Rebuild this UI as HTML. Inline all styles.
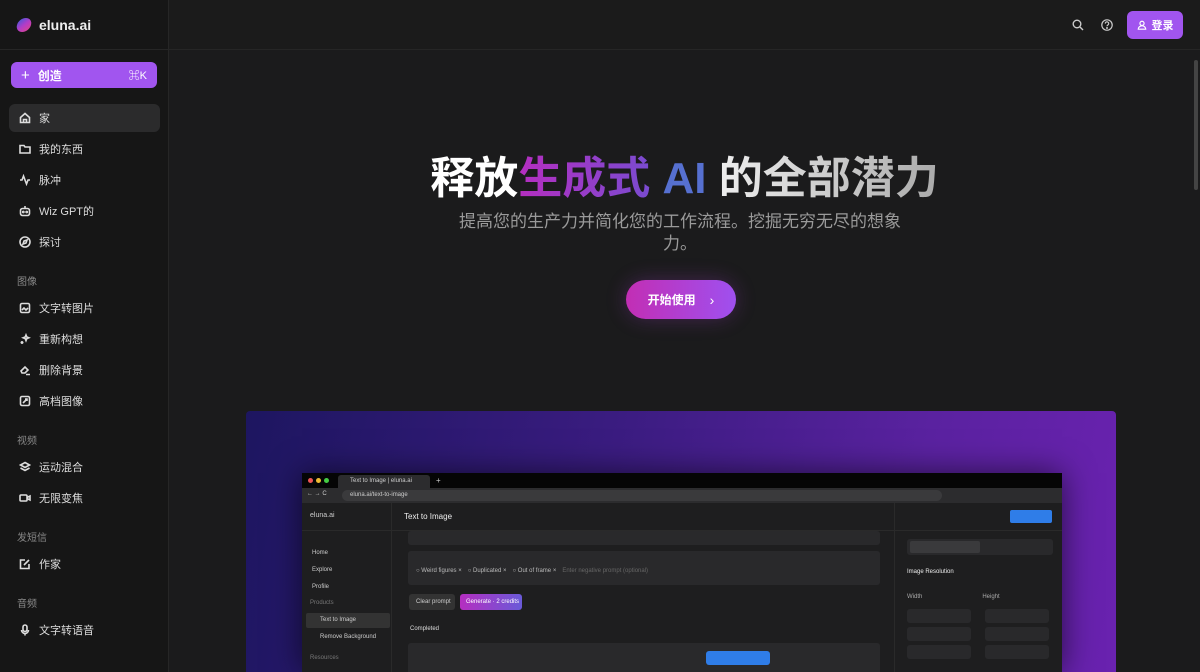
<!DOCTYPE html>
<html><head><meta charset="utf-8"><style>
*{box-sizing:border-box;margin:0;padding:0}
html,body{width:1200px;height:672px;overflow:hidden}
body{background:#1b1b1c;font-family:"Liberation Sans","Noto Sans CJK SC",sans-serif;color:#ddd;position:relative}
.sb{position:absolute;left:0;top:0;width:169px;height:672px;background:#161616;border-right:1px solid #262626}
.logo{height:50px;border-bottom:1px solid #262626;display:flex;align-items:center;padding-left:17px;font-weight:bold;font-size:14px;color:#eee}
.lg{width:14px;height:14px;border-radius:50%;background:linear-gradient(135deg,#3b5bdb,#b23cc8,#e0458a);margin-right:8px;transform:skewX(-15deg)}
.create{position:absolute;left:11px;top:62px;width:146px;height:26px;border-radius:6px;background:#a155ef;color:#fff;font-size:12px;font-weight:bold;display:flex;align-items:center;padding:0 10px}
.create .k{margin-left:auto;font-size:11px;font-weight:normal}
.it{position:absolute;left:9px;width:151px;height:28px;border-radius:6px;display:flex;align-items:center;padding-left:10px;font-size:11px;color:#ddd}
.it svg{width:12px;height:12px;margin-right:8px;stroke:#ddd;fill:none;stroke-width:1.6}
.it.a{background:#2b2b2c}
.sec{position:absolute;left:17px;font-size:10px;color:#888}
.hdr{position:absolute;left:169px;top:0;right:0;height:50px;border-bottom:1px solid #262626;background:#1b1b1b}
.login{position:absolute;right:17px;top:11px;width:56px;height:28px;border-radius:6px;background:#a155ef;color:#fff;font-size:11px;font-weight:bold;display:flex;align-items:center;justify-content:center;gap:5px}
.ic{position:absolute;top:19px;width:12px;height:12px}
.h1{position:absolute;left:169px;right:0;top:142px;text-align:center;font-size:44px;font-weight:bold;letter-spacing:0;color:#fff}
.g1{background:linear-gradient(90deg,#b52ec0,#7a4bd0);-webkit-background-clip:text;color:transparent}
.g2{color:#5670d0}
.g3{background:linear-gradient(90deg,#eee,#aaa);-webkit-background-clip:text;color:transparent}
.sub{position:absolute;left:455px;width:450px;top:211px;text-align:center;font-size:17px;line-height:22px;color:#9a9a9a}
.cta{position:absolute;left:626px;top:280px;width:110px;height:39px;border-radius:20px;background:linear-gradient(90deg,#c22eb4,#9f50ef);color:#fff;font-size:12px;font-weight:bold;display:flex;align-items:center;justify-content:center;gap:14px;box-shadow:0 0 20px rgba(160,60,200,.3)}
.panel{position:absolute;left:246px;top:411px;width:870px;height:270px;border-radius:4px;background:linear-gradient(100deg,#1d1660 0%,#3a1c80 40%,#5a22a0 75%,#6a22b0 100%)}
.br{position:absolute;left:302px;top:473px;width:760px;height:199px;background:#1e1e1f;box-shadow:0 0 30px rgba(0,0,0,.6);font-size:6px;color:#ccc;overflow:hidden}
.tb{height:15px;background:#050505;position:relative}
.ab{height:15px;background:#2c2c2e;position:relative}
.abin{position:absolute;left:40px;right:120px;top:2px;height:11px;background:#3a3a3c;border-radius:6px;padding-left:8px;line-height:11px;font-size:6px}
.app{position:absolute;top:30px;left:0;right:0;bottom:0}
.box{position:absolute;background:#29292b;border-radius:3px}
</style></head><body>
<div class="sb">
<div class="logo"><div class="lg"></div>eluna.ai</div>
<div class="create"><span style="font-size:15px;margin-right:8px;font-weight:normal">+</span>创造<span class="k">⌘K</span></div>
<div class="it a" style="top:104px"><svg viewBox="0 0 12 12"><path d="M1.5 5.5L6 1.5l4.5 4v5h-9z M4.5 10.5V7.5h3v3"/></svg>家</div>
<div class="it" style="top:135px"><svg viewBox="0 0 12 12"><path d="M1 2.5h4l1 1.5h5v6H1z"/></svg>我的东西</div>
<div class="it" style="top:166px"><svg viewBox="0 0 12 12"><path d="M1 6h2l1.5-4 3 8 1.5-4h2"/></svg>脉冲</div>
<div class="it" style="top:197px"><svg viewBox="0 0 12 12"><rect x="1.5" y="3.5" width="9" height="7" rx="2"/><path d="M6 1v2.5"/><circle cx="4.3" cy="7" r=".6"/><circle cx="7.7" cy="7" r=".6"/></svg>Wiz GPT的</div>
<div class="it" style="top:228px"><svg viewBox="0 0 12 12"><circle cx="6" cy="6" r="5"/><path d="M8 4L5 5 4 8l3-1z"/></svg>探讨</div>
<div class="sec" style="top:273px">图像</div>
<div class="it" style="top:294px"><svg viewBox="0 0 12 12"><rect x="1.5" y="1.5" width="9" height="9" rx="1.5"/><path d="M3 8l2-2 2 2 2-2"/></svg>文字转图片</div>
<div class="it" style="top:325px"><svg viewBox="0 0 12 12"><path d="M7 2l.8 2 2 .8-2 .8L7 7.6l-.8-2-2-.8 2-.8zM3 8v3M1.5 9.5h3"/></svg>重新构想</div>
<div class="it" style="top:356px"><svg viewBox="0 0 12 12"><path d="M2 7l4-4 3 3-3 3H3zM7 10.5h4"/></svg>删除背景</div>
<div class="it" style="top:387px"><svg viewBox="0 0 12 12"><rect x="1.5" y="1.5" width="9" height="9" rx="1.5"/><path d="M4 8l4-4M6 4h2v2"/></svg>高档图像</div>
<div class="sec" style="top:432px">视频</div>
<div class="it" style="top:453px"><svg viewBox="0 0 12 12"><path d="M6 1.5L10.5 4 6 6.5 1.5 4zM1.5 7L6 9.5 10.5 7"/></svg>运动混合</div>
<div class="it" style="top:484px"><svg viewBox="0 0 12 12"><rect x="1" y="3" width="7" height="6" rx="1"/><path d="M8 5.5l3-1.5v4L8 6.5"/></svg>无限变焦</div>
<div class="sec" style="top:529px">发短信</div>
<div class="it" style="top:550px"><svg viewBox="0 0 12 12"><path d="M10 6v4.5H1.5V2H6M5 7l5-5"/></svg>作家</div>
<div class="sec" style="top:595px">音频</div>
<div class="it" style="top:616px"><svg viewBox="0 0 12 12"><rect x="4" y="1" width="4" height="6.5" rx="2"/><path d="M2.5 6a3.5 3.5 0 007 0M6 9.5v2"/></svg>文字转语音</div>
</div>
<div class="hdr">
<svg class="ic" style="left:903px" viewBox="0 0 12 12" fill="none" stroke="#ccc" stroke-width="1.4"><circle cx="5" cy="5" r="3.8"/><path d="M8 8l3 3"/></svg>
<svg class="ic" style="left:932px" viewBox="0 0 12 12" fill="none" stroke="#ccc" stroke-width="1.2"><circle cx="6" cy="6" r="5.2"/><path d="M4.3 4.6a1.7 1.7 0 113 1c-.8.5-1.3.8-1.3 1.6"/><circle cx="6" cy="9" r=".4" fill="#ccc"/></svg>
<div class="login"><svg width="10" height="10" viewBox="0 0 12 12" fill="none" stroke="#fff" stroke-width="1.4"><circle cx="6" cy="4" r="2.5"/><path d="M1.5 11a4.5 4 0 019 0z"/></svg>登录</div>
</div>
<div style="position:absolute;right:2px;top:60px;width:4px;height:130px;background:#444;border-radius:2px"></div>
<div class="h1">释放<span class="g1">生成式</span> <span class="g2">AI</span> <span class="g3">的全部潜力</span></div>
<div class="sub">提高您的生产力并简化您的工作流程。挖掘无穷无尽的想象力。</div>
<div class="cta">开始使用<span style="font-weight:normal;font-size:14px">›</span></div>
<div class="panel"></div>
<div class="br">
<div class="tb"><span style="position:absolute;left:6px;top:5px;width:5px;height:5px;border-radius:50%;background:#e55"></span><span style="position:absolute;left:14px;top:5px;width:5px;height:5px;border-radius:50%;background:#eb3"></span><span style="position:absolute;left:22px;top:5px;width:5px;height:5px;border-radius:50%;background:#4c4"></span>
<div style="position:absolute;left:36px;top:2px;width:92px;height:13px;background:#2c2c2e;border-radius:3px 3px 0 0;padding:3px 0 0 12px">Text to Image | eluna.ai</div><span style="position:absolute;left:134px;top:3px;font-size:8px">+</span></div>
<div class="ab"><span style="position:absolute;left:5px;top:3px">← → C</span><div class="abin">eluna.ai/text-to-image</div></div>
<div class="app">
<div style="position:absolute;left:0;top:0;width:90px;bottom:0;border-right:1px solid #2a2a2a">
<div style="padding:9px 8px;font-size:7px;height:28px;border-bottom:1px solid #2a2a2a">eluna.ai</div>
<div style="position:absolute;left:10px;top:42px;line-height:17px">Home<br>Explore<br>Profile</div>
<div style="position:absolute;left:8px;top:97px;color:#777">Products</div>
<div style="position:absolute;left:4px;top:110px;width:84px;height:15px;background:#333;border-radius:2px;padding:4px 0 0 14px">Text to Image</div>
<div style="position:absolute;left:18px;top:131px">Remove Background</div>
<div style="position:absolute;left:8px;top:152px;color:#777">Resources</div>
</div>
<div style="position:absolute;left:90px;right:0;top:0;height:28px;border-bottom:1px solid #2a2a2a"><span style="position:absolute;left:12px;top:9px;font-size:8px;color:#eee">Text to Image</span><span style="position:absolute;right:10px;top:7px;width:42px;height:13px;background:#2f7de8;border-radius:2px"></span></div>
<div class="box" style="left:106px;top:28px;width:472px;height:14px"></div>
<div class="box" style="left:106px;top:48px;width:472px;height:34px"><span style="position:absolute;left:8px;top:14px;color:#bbb">○ Weird figures ×　○ Duplicated ×　○ Out of frame ×　<span style="color:#666">Enter negative prompt (optional)</span></span></div>
<div class="box" style="left:107px;top:91px;width:46px;height:16px;background:#333;padding:5px 0 0 7px">Clear prompt</div>
<div style="position:absolute;left:158px;top:91px;width:62px;height:16px;border-radius:3px;background:linear-gradient(90deg,#b52ec0,#6a5ad8);padding:5px 0 0 6px;color:#fff">Generate · 2 credits</div>
<div style="position:absolute;left:108px;top:123px;color:#ddd">Completed</div>
<div class="box" style="left:106px;top:140px;width:472px;height:40px"><span style="position:absolute;right:110px;top:8px;width:64px;height:14px;background:#2f7de8;border-radius:3px"></span></div>
<div style="position:absolute;left:592px;top:0;right:0;bottom:0;border-left:1px solid #2a2a2a">
<div class="box" style="left:12px;top:36px;width:146px;height:16px"><span style="position:absolute;left:3px;top:2px;width:70px;height:12px;background:#3a3a3c;border-radius:2px"></span></div>
<div style="position:absolute;left:12px;top:66px;color:#eee">Image Resolution</div>
<div style="position:absolute;left:12px;top:88px;color:#aaa">Width　　　　　　　　　　Height</div>
<div class="box" style="left:12px;top:106px;width:64px;height:14px"></div><div class="box" style="left:90px;top:106px;width:64px;height:14px"></div>
<div class="box" style="left:12px;top:124px;width:64px;height:14px"></div><div class="box" style="left:90px;top:124px;width:64px;height:14px"></div>
<div class="box" style="left:12px;top:142px;width:64px;height:14px"></div><div class="box" style="left:90px;top:142px;width:64px;height:14px"></div>
</div>
</div>
</div>
</body></html>
